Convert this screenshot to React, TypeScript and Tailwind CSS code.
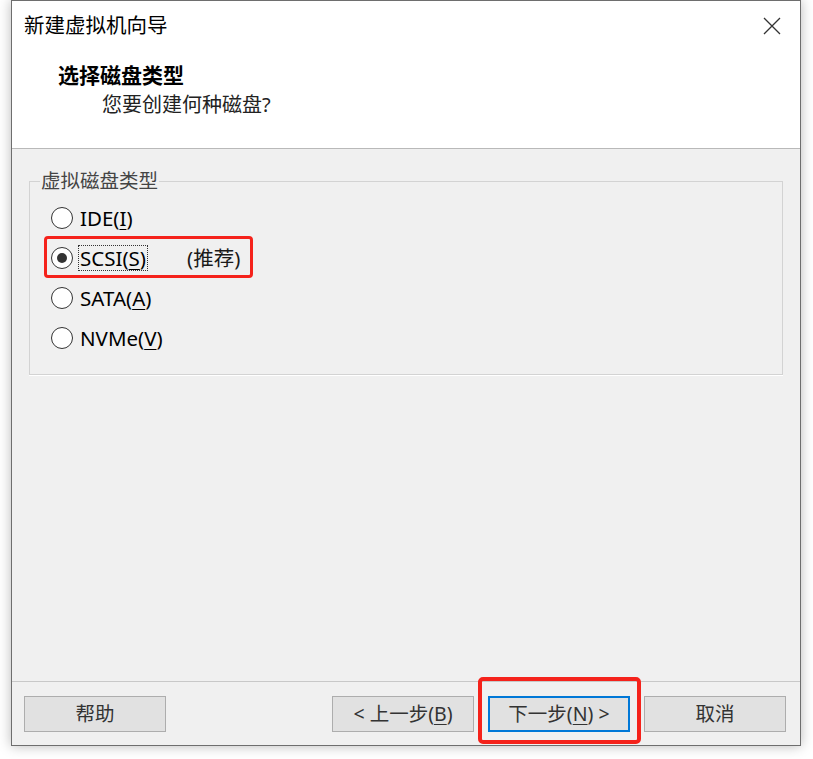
import React from "react";

const CJK = "font-['Segoe_UI','Noto_Sans','Noto_Sans_CJK_SC',sans-serif]";

function Radio({ checked }: { checked?: boolean }) {
  return (
    <span className="flex h-[22px] w-[22px] shrink-0 items-center justify-center rounded-full border border-[#333333] bg-white">
      {checked && <span className="h-[10px] w-[10px] rounded-full bg-[#333333]" />}
    </span>
  );
}

function Key({ k }: { k: string }) {
  return <span className="underline decoration-1 underline-offset-[3px]">{k}</span>;
}

function Option({ name, k, checked, note }: { name: string; k: string; checked?: boolean; note?: string }) {
  return (
    <div className="relative flex h-[40px] items-center">
      <Radio checked={checked} />
      <span
        className={
          "ml-[5px] px-px text-[20.5px] leading-[24px] text-black " +
          (checked ? "border border-dotted border-[#333333]" : "border border-transparent")
        }
      >
        {name}(<Key k={k} />)
      </span>
      {note && <span className="ml-[39px] text-[20.5px] text-[#1a1a1a]">{note}</span>}
      {checked && (
        <span className="pointer-events-none absolute left-[-7px] top-[-2px] h-[42px] w-[209px] rounded-[4px] border-[3px] border-[#f5221b]" />
      )}
    </div>
  );
}

function Button({ children, primary }: { children: React.ReactNode; primary?: boolean }) {
  return (
    <button
      className={
        "flex h-[36px] w-[142px] items-center justify-center bg-[#e1e1e1] text-[19.5px] text-[#333333] " +
        (primary ? "border-2 border-[#0078d7]" : "border border-[#adadad]")
      }
    >
      {children}
    </button>
  );
}

export default function App() {
  return (
    <div className={"h-[759px] w-[813px] bg-white pl-[11px] text-[19.5px] " + CJK}>
      <div className="w-[790px] border border-[#6e6e6e] shadow-[0_0_12px_rgba(0,0,0,0.28)]">
        <div className="h-[147px] bg-white">
          <div className="flex h-[49px] items-center justify-between pl-[12px] pr-[19px]">
            <span className="text-[20.5px] text-black">新建虚拟机向导</span>
            <svg width="18" height="18" viewBox="0 0 18 18">
              <path d="M1 1 L17 17 M17 1 L1 17" stroke="#333" strokeWidth="1.3" fill="none" />
            </svg>
          </div>
          <div className="pl-[46px] pt-[10px] text-[21px] font-bold leading-[30px] text-black">选择磁盘类型</div>
          <div className="pl-[90px] text-[20px] leading-[30px] text-[#222222]">您要创建何种磁盘?</div>
        </div>
        <div className="h-px bg-[#b9b9b9]" />
        <div className="h-[532px] bg-[#f0f0f0] px-[17px] pt-[19px]">
          <fieldset className="border border-[#d3d3d3] px-[21px] pb-[16px] pt-[4px] shadow-[0_1px_0_#ffffff]">
            <legend className="ml-[-11px] px-px leading-[26px] text-[#444444]">虚拟磁盘类型</legend>
            <Option name="IDE" k="I" />
            <Option name="SCSI" k="S" checked note="(推荐)" />
            <Option name="SATA" k="A" />
            <Option name="NVMe" k="V" />
          </fieldset>
        </div>
        <div className="h-px bg-[#c8c8c8]" />
        <div className="flex h-[63px] items-start bg-[#f0f0f0] pl-[12px] pr-[14px] pt-[14px]">
          <Button>帮助</Button>
          <div className="ml-auto flex gap-[14px]">
            <Button>
              &lt; 上一步(<Key k="B" />)
            </Button>
            <div className="relative">
              <Button primary>
                下一步(<Key k="N" />) &gt;
              </Button>
              <span className="pointer-events-none absolute left-[-10px] top-[-19px] h-[67px] w-[163px] rounded-[5px] border-4 border-[#f5221b]" />
            </div>
            <Button>取消</Button>
          </div>
        </div>
      </div>
    </div>
  );
}
